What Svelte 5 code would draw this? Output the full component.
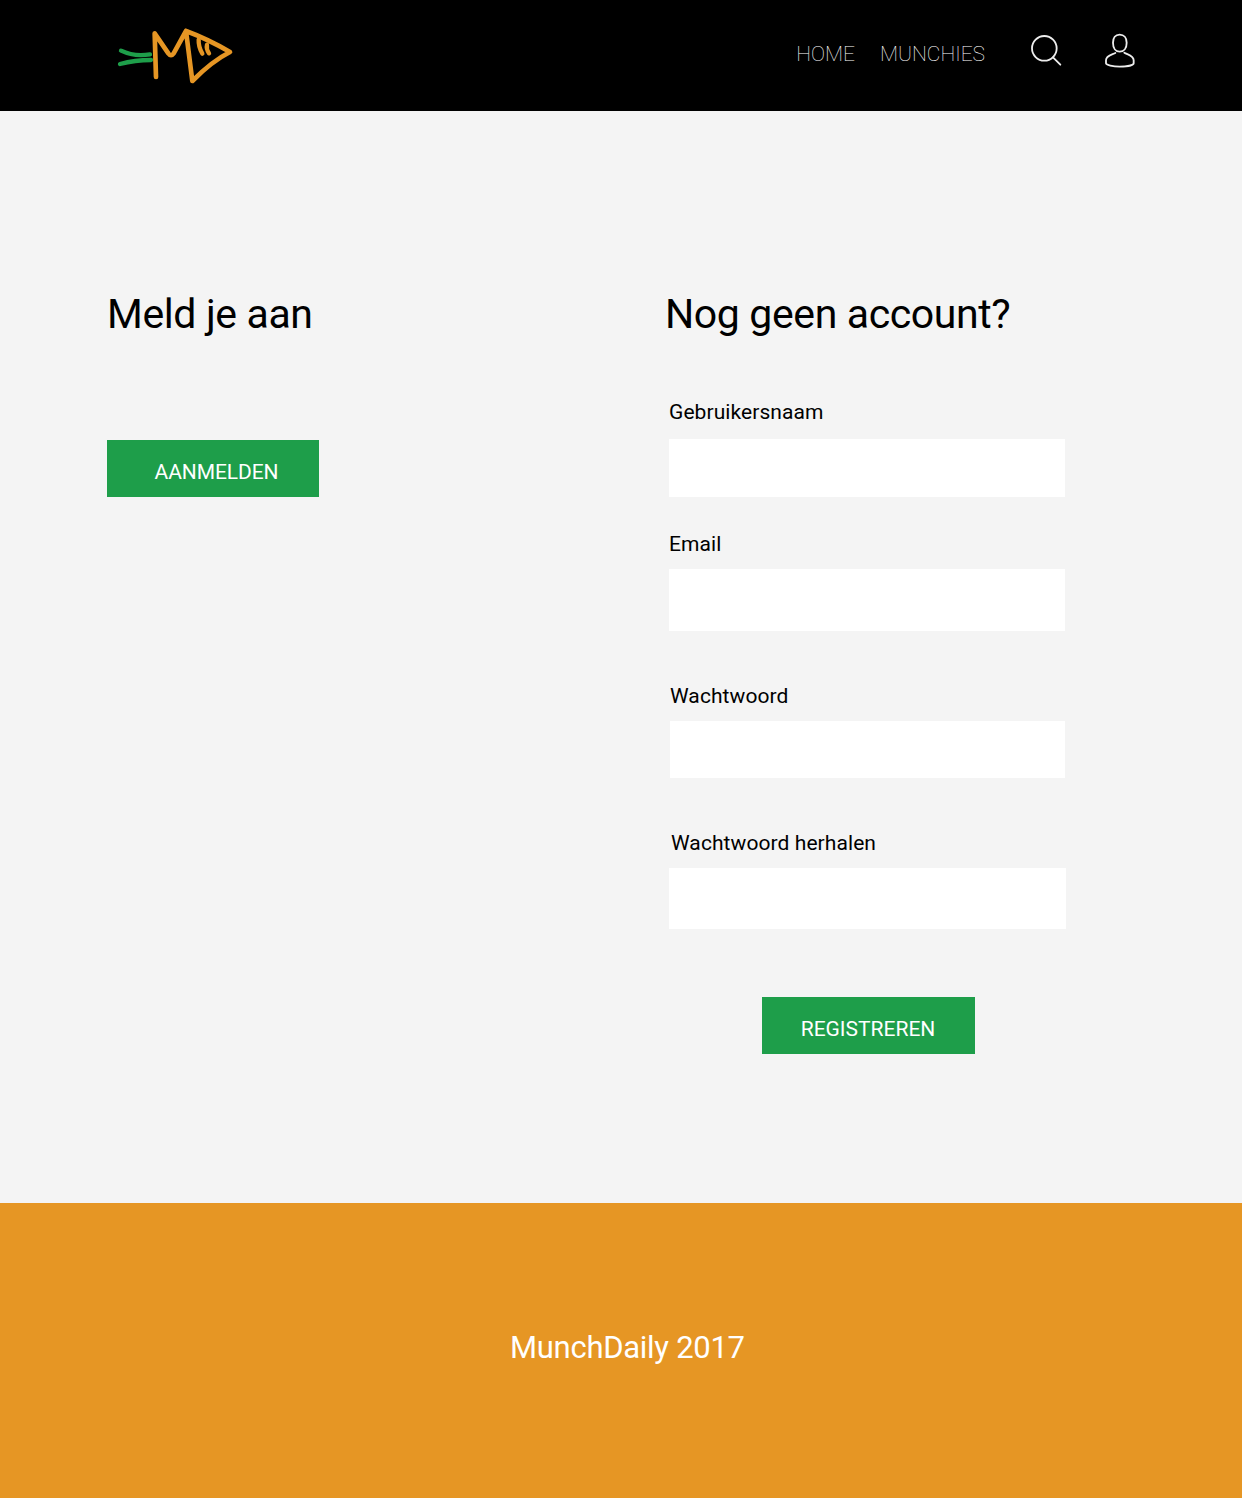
<script>
  const fields = [
    { id: 'username', label: 'Gebruikersnaam', type: 'text' },
    { id: 'email', label: 'Email', type: 'email' },
    { id: 'password', label: 'Wachtwoord', type: 'password' },
    { id: 'repeat', label: 'Wachtwoord herhalen', type: 'password' }
  ];
</script>

<div class="page">
  <header>
    <a class="logo" href="#home" aria-label="MunchDaily">
      <svg width="140" height="90" viewBox="0 0 420 270" fill="none" stroke-width="13" stroke-linecap="round" stroke-linejoin="round">
        <path stroke="#1e9e4a" d="M48 107Q88 126 135 118M45 147Q90 135 138 135" />
        <path stroke="#e69624" stroke-width="14" d="M153 186L149 55L190 115Q198 126 206 115L243 48L262 198Q320 139 375 111Q308 72 243 48" />
        <path stroke="#e69624" d="M281 74Q280 96 292 116M306 89Q303 101 312 115" />
      </svg>
    </a>
    <nav>
      <a href="#home">HOME</a>
      <a href="#munchies">MUNCHIES</a>
    </nav>
    <div class="icons">
      <button aria-label="Zoeken">
        <svg width="50" height="60" viewBox="0 0 150 180" fill="none" stroke="#ededed" stroke-width="5.5" stroke-linecap="round">
          <circle cx="73" cy="85" r="37" />
          <path d="M99 112L121 134" />
        </svg>
      </button>
      <button aria-label="Account">
        <svg width="80" height="60" viewBox="150 0 240 180" fill="none" stroke="#ededed" stroke-width="5.5" stroke-linecap="round" stroke-linejoin="round">
          <path d="M299 44C286 44 279 54 279 68C279 84 287 95 299 95C312 95 320 84 320 68C320 54 312 44 299 44Z" />
          <path d="M286 99C277 104 258 106 258 121V130C258 135 279 140 299 140C320 140 341 136 341 130V121C341 106 323 104 313 98" />
        </svg>
      </button>
    </div>
  </header>

  <main>
    <section class="login">
      <h1>Meld je aan</h1>
      <button class="action">AANMELDEN</button>
    </section>
    <section class="register">
      <h1>Nog geen account?</h1>
      <form>
        {#each fields as f}
          <div class="field {f.id}">
            <label for={f.id}>{f.label}</label>
            <input id={f.id} type={f.type} />
          </div>
        {/each}
        <button class="action" type="button">REGISTREREN</button>
      </form>
    </section>
  </main>

  <footer>MunchDaily 2017</footer>
</div>

<style>
  :global(body) { margin: 0; }
  .page {
    display: flex;
    flex-direction: column;
    height: 1498px;
    background: #f4f4f4;
    color: #000;
    font-family: Roboto, "Liberation Sans", sans-serif;
  }
  header {
    display: flex;
    align-items: flex-start;
    box-sizing: border-box;
    height: 111px;
    padding: 15px 92px 0 105px;
    background: #000;
  }
  svg { display: block; }
  nav {
    display: flex;
    gap: 25px;
    margin: 25px 35px 0 auto;
    font-size: 21px;
    font-weight: 100;
    line-height: 28px;
  }
  nav a { color: #fff; text-decoration: none; white-space: nowrap; }
  .icons { display: flex; margin-top: 5px; }
  .icons button { padding: 0; border: 0; background: none; }
  main {
    display: flex;
    box-sizing: border-box;
    height: 1092px;
    padding: 179px 0 0 107px;
  }
  .login { width: 558px; }
  h1 {
    margin: 0;
    font-size: 41px;
    font-weight: 400;
    line-height: 48px;
    letter-spacing: -0.38px;
    white-space: nowrap;
  }
  form { width: 398px; padding: 62px 0 0 4px; }
  .field { display: flex; flex-direction: column; }
  label {
    height: 24px;
    margin-bottom: 14px;
    font-size: 21px;
    line-height: 25px;
    letter-spacing: 0.08px;
    white-space: nowrap;
  }
  input {
    box-sizing: border-box;
    width: 396px;
    height: 59px;
    padding: 0 12px;
    border: 0;
    background: #fff;
    font: 21px Roboto, sans-serif;
  }
  .username label { margin-bottom: 15px; }
  .username input { height: 58px; }
  .email { margin-top: 35px; }
  .email input { height: 62px; }
  .email label { margin-bottom: 13px; }
  .password { margin-top: 53px; }
  .password label { margin-bottom: 13px; padding-left: 1px; }
  .password input { width: 395px; height: 57px; margin-left: 1px; }
  .repeat { margin-top: 53px; }
  .repeat label { margin-bottom: 13px; padding-left: 2px; }
  .repeat input { width: 397px; height: 61px; }
  .action {
    display: block;
    width: 212px;
    height: 57px;
    padding: 7px 0 0;
    border: 0;
    background: #1e9e4a;
    color: #fff;
    font: 21px/24px Roboto, sans-serif;
    letter-spacing: -0.1px;
  }
  .login .action { margin-top: 102px; padding: 6px 0 0 7px; }
  form .action { width: 213px; margin: 68px 0 0 93px; padding-right: 1px; letter-spacing: 0; }
  footer {
    flex: 1;
    padding: 125px 0 0 510px;
    background: #e69624;
    color: #fff;
    font-size: 31px;
    line-height: 40px;
    letter-spacing: -0.28px;
  }
</style>
